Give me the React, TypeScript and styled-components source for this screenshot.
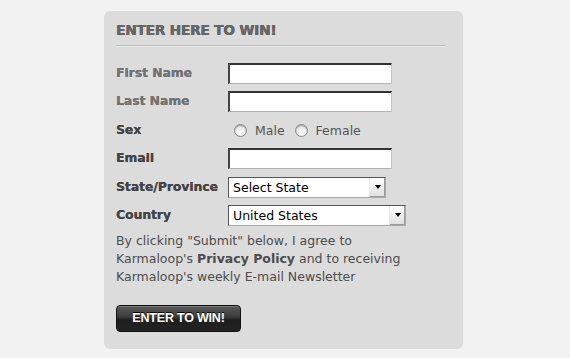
import React from "react"
import styled, { createGlobalStyle } from "styled-components"

const GlobalStyle = createGlobalStyle`
    html, body {
        margin: 0;
        padding: 0;
        background: #f2f2f2;
        font-family: "DejaVu Sans", Verdana, sans-serif;
    }
`

const Page = styled.div`
    padding: 11px 0 0 104px;
    height: 358px;
    box-sizing: border-box;
`

const Panel = styled.div`
    width: 359px;
    height: 338px;
    box-sizing: border-box;
    padding: 9px 17px 0 12px;
    background: #dcdcdc;
    border-radius: 6px;
`

const Title = styled.h2`
    margin: 0;
    padding: 0;
    font-family: "DejaVu Sans", Verdana, sans-serif;
    font-weight: 900;
    font-size: 13.7px;
    letter-spacing: -0.2px;
    line-height: 20px;
    color: #666;
    text-shadow: 0 0 0.6px #666, 0.4px 0 0 #666;
`

const Divider = styled.div`
    margin: 5px 0 16px 0;
    height: 1px;
    background: #bdbdbd;
    border-bottom: 1px solid #ececec;
`

const FormGrid = styled.div`
    display: grid;
    grid-template-columns: 112px auto;
    grid-auto-rows: 21px;
    row-gap: 7.4px;
    align-items: center;
`

const Label = styled.div<{ $light?: boolean }>`
    font-size: 12.3px;
    font-weight: bold;
    color: ${p => (p.$light ? "#727272" : "#444")};
    line-height: 21px;
    white-space: nowrap;
    text-shadow: 0.2px 0 0 currentColor;
`

const TextInput = styled.div`
    width: 164px;
    height: 21px;
    box-sizing: border-box;
    background: #fff;
    border-style: solid;
    border-width: 2px 1px 1px 2px;
    border-color: #333 #c8c8c8 #b4b4b4 #444;
`

const RadioGroup = styled.div`
    display: flex;
    align-items: center;
    padding-left: 6px;
    font-size: 12.5px;
    color: #555;
`

const RadioOption = styled.label`
    display: flex;
    align-items: center;
    gap: 8px;
    margin-right: 10px;
`

const RadioCircle = styled.span`
    width: 13px;
    height: 13px;
    border-radius: 50%;
    box-sizing: border-box;
    border: 1px solid #8a8a8a;
    background: radial-gradient(circle at 50% 70%, #ffffff 0%, #e8e8e8 60%, #c4c4c4 100%);
    box-shadow: inset 0 1px 1px rgba(0, 0, 0, 0.25);
`

const SelectBox = styled.div<{ $width: number }>`
    width: ${p => p.$width}px;
    height: 21px;
    box-sizing: border-box;
    display: flex;
    align-items: stretch;
    background: #fff;
    border-style: solid;
    border-width: 1px;
    border-color: #555 #aaa #aaa #555;
`

const SelectValue = styled.div`
    flex: 1;
    font-size: 12.5px;
    line-height: 19px;
    padding-left: 4px;
    color: #000;
`

const SelectArrow = styled.div`
    width: 15px;
    display: flex;
    align-items: center;
    justify-content: center;
    background: linear-gradient(#ffffff, #dedede);
    border-left: 1px solid #e8e8e8;
    box-shadow: inset -1px -1px 0 #9a9a9a;

    &::after {
        content: "";
        border-left: 3.5px solid transparent;
        border-right: 3.5px solid transparent;
        border-top: 4px solid #000;
    }
`

const Notice = styled.p`
    margin: 6px 0 0 0;
    font-size: 12.5px;
    line-height: 18px;
    color: #4c4c4c;

    b {
        color: #4c4c4c;
    }
`

const SubmitButton = styled.button`
    display: block;
    margin-top: 19px;
    width: 125px;
    height: 27px;
    border: 1px solid #111;
    border-radius: 4px;
    background: linear-gradient(#5a5a5a 0%, #3a3a3a 45%, #1e1e1e 55%, #232323 100%);
    box-shadow: inset 0 1px 0 #7a7a7a;
    color: #fff;
    font-family: "Liberation Sans", Arial, sans-serif;
    font-weight: bold;
    font-size: 12.5px;
    letter-spacing: -0.2px;
    text-shadow: 0 -1px 0 #000;
    cursor: pointer;
`

export default function App() {
    return (
        <>
            <GlobalStyle />
            <Page>
                <Panel>
                    <Title>ENTER HERE TO WIN!</Title>
                    <Divider />

                    <FormGrid>
                        <Label $light>First Name</Label>
                        <TextInput />

                        <Label $light>Last Name</Label>
                        <TextInput />

                        <Label>Sex</Label>
                        <RadioGroup>
                            <RadioOption><RadioCircle />Male</RadioOption>
                            <RadioOption><RadioCircle />Female</RadioOption>
                        </RadioGroup>

                        <Label>Email</Label>
                        <TextInput />

                        <Label>State/Province</Label>
                        <SelectBox $width={158}>
                            <SelectValue>Select State</SelectValue>
                            <SelectArrow />
                        </SelectBox>

                        <Label>Country</Label>
                        <SelectBox $width={178}>
                            <SelectValue>United States</SelectValue>
                            <SelectArrow />
                        </SelectBox>
                    </FormGrid>

                    <Notice>
                        By clicking "Submit" below, I agree to<br />
                        Karmaloop's <b>Privacy Policy</b> and to receiving<br />
                        Karmaloop's weekly E-mail Newsletter
                    </Notice>

                    <SubmitButton>ENTER TO WIN!</SubmitButton>
                </Panel>
            </Page>
        </>
    )
}
